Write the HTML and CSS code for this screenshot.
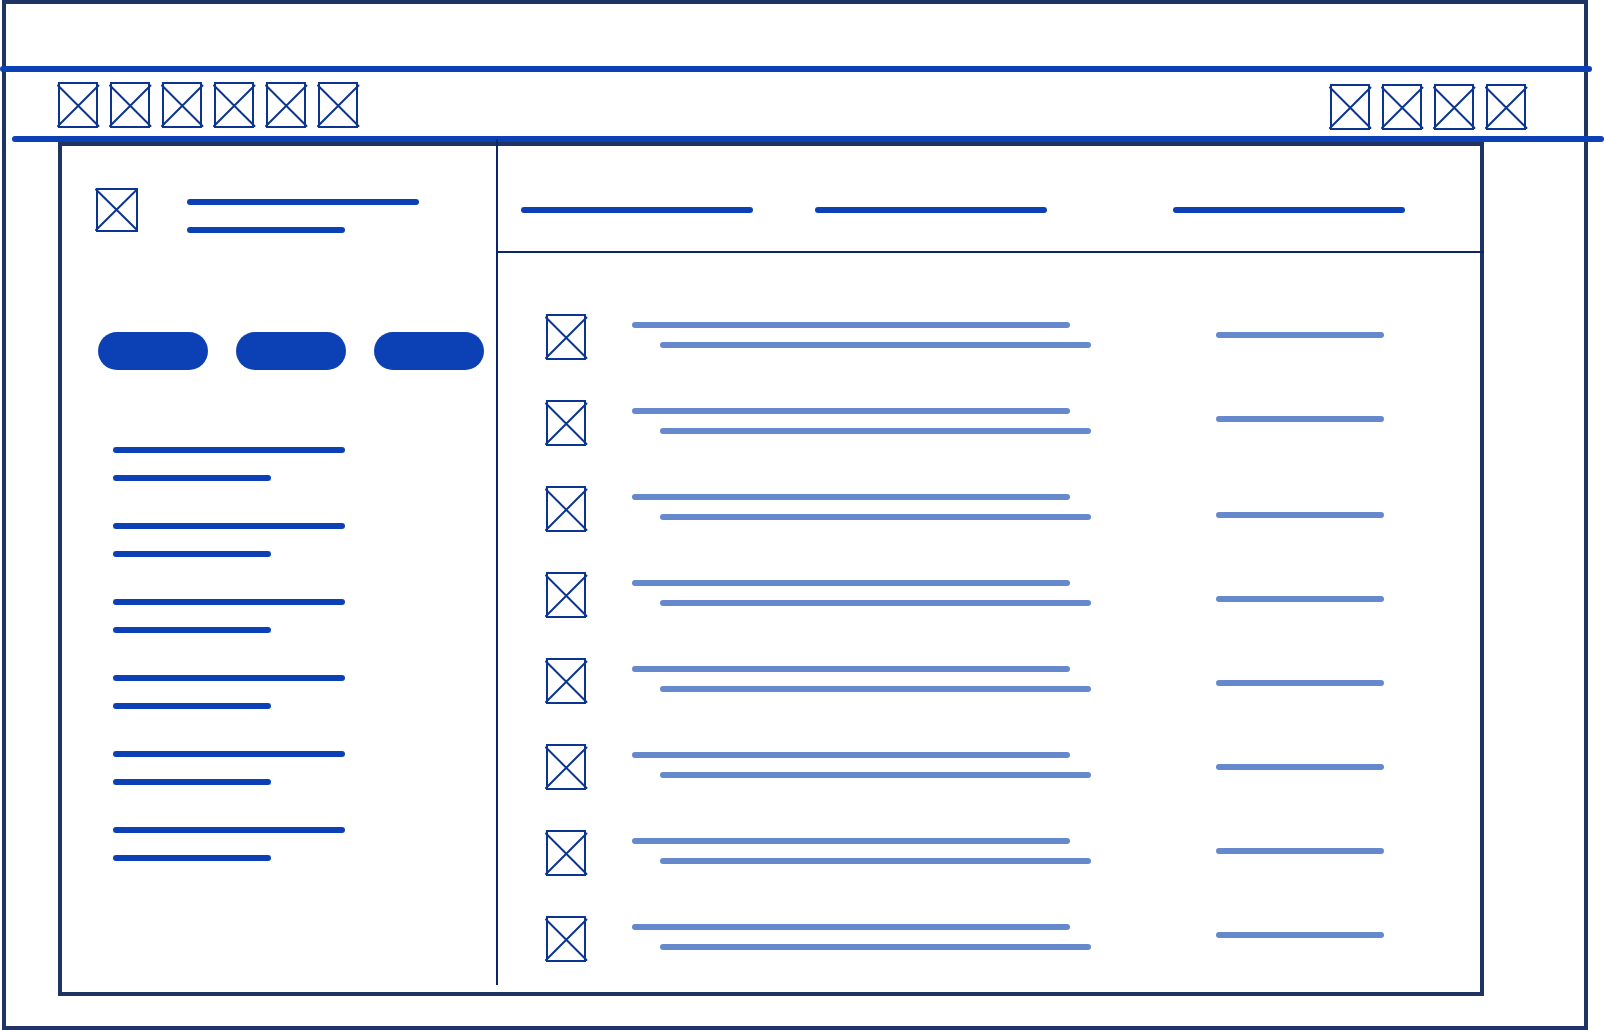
FILE: index.html
```
<!DOCTYPE html>
<html lang="en">
<head>
<meta charset="utf-8">
<meta name="viewport" content="width=device-width, initial-scale=1">
<title>Wireframe</title>
<link rel="stylesheet" href="styles.css">
</head>
<body>
<svg class="defs" aria-hidden="true">
  <symbol id="box" viewBox="0 0 40 46" overflow="visible">
    <rect x="1" y="1" width="38" height="44"/>
    <path d="M0 3.5L40.5 44M40.5 3.5L0 44"/>
  </symbol>
</svg>
<div class="frame">
  <div class="titlebar"></div>
  <div class="rule rule-top"></div>
  <nav class="toolbar">
    <div class="tools">
      <svg class="icon"><use href="#box"/></svg>
      <svg class="icon"><use href="#box"/></svg>
      <svg class="icon"><use href="#box"/></svg>
      <svg class="icon"><use href="#box"/></svg>
      <svg class="icon"><use href="#box"/></svg>
      <svg class="icon"><use href="#box"/></svg>
    </div>
    <div class="tools tools-end">
      <svg class="icon"><use href="#box"/></svg>
      <svg class="icon"><use href="#box"/></svg>
      <svg class="icon"><use href="#box"/></svg>
      <svg class="icon"><use href="#box"/></svg>
    </div>
  </nav>
  <div class="rule rule-bottom"></div>
  <div class="workspace">
    <aside class="sidebar">
      <div class="profile">
        <svg class="avatar" viewBox="0 0 42 44"><rect x="1" y="1" width="40" height="42"/><path d="M0 1.5L41 42M41 1.5L0 42"/></svg>
        <div class="pair profile-text"><div class="line long"></div><div class="line short"></div></div>
      </div>
      <div class="pills">
        <button class="pill" type="button"></button>
        <button class="pill" type="button"></button>
        <button class="pill" type="button"></button>
      </div>
      <div class="groups">
        <div class="pair"><div class="line long"></div><div class="line short"></div></div>
        <div class="pair"><div class="line long"></div><div class="line short"></div></div>
        <div class="pair"><div class="line long"></div><div class="line short"></div></div>
        <div class="pair"><div class="line long"></div><div class="line short"></div></div>
        <div class="pair"><div class="line long"></div><div class="line short"></div></div>
        <div class="pair"><div class="line long"></div><div class="line short"></div></div>
      </div>
    </aside>
    <main class="main">
      <header class="columns">
        <div class="line long"></div>
        <div class="line long"></div>
        <div class="line long"></div>
      </header>
      <div class="content">
        <div class="rows">
          <div class="row"><svg class="icon"><use href="#box"/></svg><div class="text"><div class="line soft primary"></div><div class="line soft secondary"></div></div></div>
          <div class="row"><svg class="icon"><use href="#box"/></svg><div class="text"><div class="line soft primary"></div><div class="line soft secondary"></div></div></div>
          <div class="row"><svg class="icon"><use href="#box"/></svg><div class="text"><div class="line soft primary"></div><div class="line soft secondary"></div></div></div>
          <div class="row"><svg class="icon"><use href="#box"/></svg><div class="text"><div class="line soft primary"></div><div class="line soft secondary"></div></div></div>
          <div class="row"><svg class="icon"><use href="#box"/></svg><div class="text"><div class="line soft primary"></div><div class="line soft secondary"></div></div></div>
          <div class="row"><svg class="icon"><use href="#box"/></svg><div class="text"><div class="line soft primary"></div><div class="line soft secondary"></div></div></div>
          <div class="row"><svg class="icon"><use href="#box"/></svg><div class="text"><div class="line soft primary"></div><div class="line soft secondary"></div></div></div>
          <div class="row"><svg class="icon"><use href="#box"/></svg><div class="text"><div class="line soft primary"></div><div class="line soft secondary"></div></div></div>
        </div>
        <div class="details">
          <div class="detail-set">
            <div class="line soft"></div>
            <div class="line soft"></div>
          </div>
          <div class="detail-set">
            <div class="line soft"></div>
            <div class="line soft"></div>
            <div class="line soft"></div>
            <div class="line soft"></div>
            <div class="line soft"></div>
            <div class="line soft"></div>
          </div>
        </div>
      </div>
    </main>
  </div>
</div>
</body>
</html>
```
FILE: styles.css
```
:root {
  --frame: #1f3364;
  --divider: #0a2668;
  --blue: #0c41b6;
  --soft: #6688cc;
  --icon: #0b3590;
}

* { box-sizing: border-box; }

body {
  margin: 0;
  background: #fff;
  font-family: "Liberation Sans", sans-serif;
}

.defs { display: none; }

.frame {
  display: flex;
  flex-direction: column;
  min-height: 100vh;
  margin: 0 16px 0 2px;
  border: 4px solid var(--frame);
}

.titlebar { height: 62px; }

.rule,
.line {
  height: 6px;
  border-radius: 3px;
  background: var(--blue);
}

.rule { flex: none; }
.rule-top { margin: 0 -8px 0 -6px; }
.rule-bottom { margin: 0 -20px 0 6px; }

.toolbar {
  display: flex;
  justify-content: space-between;
  height: 64px;
  padding: 10px 58px 0 52px;
}

.tools { display: flex; gap: 12px; }
.tools-end { padding-top: 2px; }

.icon,
.avatar {
  flex: none;
  display: block;
  overflow: visible;
  fill: none;
  stroke: var(--icon);
  stroke-width: 2;
  stroke-linecap: round;
}

.icon { width: 40px; height: 46px; }
.avatar { width: 42px; height: 44px; }

.workspace {
  flex: 1;
  display: flex;
  margin: 0 100px 30px 52px;
  border: 4px solid var(--frame);
}

/* The divider reaches up into the toolbar rule and stops short of the bottom. */
.sidebar {
  flex: none;
  width: 436px;
  margin: -7px 0 7px;
  padding: 49px 0 0 34px;
  border-right: 2px solid var(--divider);
}

.profile { display: flex; gap: 49px; }
.profile-text { padding-top: 11px; }

.pair { display: grid; gap: 22px; }
.long { width: 232px; }
.short { width: 158px; }

.pills {
  display: flex;
  gap: 28px;
  margin: 99px 0 77px 2px;
}

.pill {
  width: 110px;
  height: 38px;
  padding: 0;
  border: 0;
  border-radius: 19px;
  background: var(--blue);
}

.groups {
  display: grid;
  gap: 42px;
  padding-left: 17px;
}

.main { flex: 1; min-width: 0; }

.columns {
  display: grid;
  grid-template-columns: 294fr 358fr 307fr;
  height: 107px;
  margin-right: -4px;
  padding: 61px 4px 0 23px;
  border-bottom: 2px solid var(--divider);
}

.content {
  display: flex;
  justify-content: space-between;
  padding: 61px 96px 0 48px;
}

.rows { display: grid; gap: 40px; }
.row { display: flex; gap: 46px; }

.text {
  display: grid;
  align-content: start;
  gap: 14px;
  padding-top: 8px;
}

.soft { background: var(--soft); }
.primary { width: 438px; }
.secondary { width: 431px; margin-left: 28px; }

.details {
  display: flex;
  flex-direction: column;
  gap: 90px;
  width: 168px;
  padding-top: 18px;
}

.detail-set { display: grid; gap: 78px; }
```
